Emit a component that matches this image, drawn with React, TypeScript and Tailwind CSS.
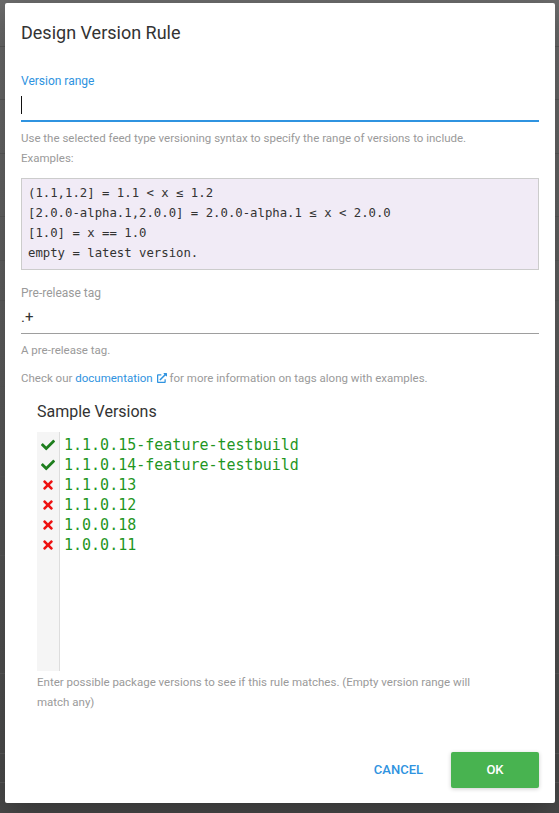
import React from "react";
import { FaCheck, FaTimes, FaExternalLinkAlt } from "react-icons/fa";

const versions = [
    { v: "1.1.0.15-feature-testbuild", ok: true },
    { v: "1.1.0.14-feature-testbuild", ok: true },
    { v: "1.1.0.13", ok: false },
    { v: "1.1.0.12", ok: false },
    { v: "1.0.0.18", ok: false },
    { v: "1.0.0.11", ok: false },
];

const examples = [
    "(1.1,1.2] = 1.1 < x ≤ 1.2",
    "[2.0.0-alpha.1,2.0.0] = 2.0.0-alpha.1 ≤ x < 2.0.0",
    "[1.0] = x == 1.0",
    "empty = latest version.",
];

const bgRows = [47, 53, 54, 63, 44, 40, 86, 90, 79, 118, 80, 29];

const App: React.FC = () => {
    return (
        <div className="relative w-[559px] h-[813px] overflow-hidden bg-gradient-to-b from-[#6c6c6c] to-[#4a4a4a] font-['Roboto',sans-serif]">
            {/* page behind the overlay */}
            <div className="flex flex-col">
                {bgRows.map((h, i) => (
                    <div key={i} className="border-b border-[#5a5a5a]" style={{ height: h }} />
                ))}
            </div>

            <div className="absolute left-[5px] top-[3px] w-[550px] h-[800px] bg-white rounded-[2px] shadow-[0_10px_30px_rgba(0,0,0,0.3)] flex flex-col">
                <h3 className="px-4 pt-[18px] text-[18px] leading-6 font-normal text-[#333]">Design Version Rule</h3>

                <div className="px-4 flex flex-col">
                    <label className="mt-[28px] text-[12px] leading-4 text-[#2f93e0]">Version range</label>
                    <div className="h-[33px] border-b-2 border-[#2f93e0] flex items-center">
                        <span className="w-px h-[18px] bg-[#111]" />
                    </div>
                    <p className="mt-[6px] text-[11.5px] leading-5 text-[#9a9a9a]">
                        Use the selected feed type versioning syntax to specify the range of versions to include.
                    </p>
                    <p className="text-[11.5px] leading-5 text-[#9a9a9a]">Examples:</p>
                    <div className="mt-[10px] h-[92px] bg-[#f1ebf6] border border-[#cccccc] pt-[4px] px-[6px] font-['DejaVu_Sans_Mono',monospace] text-[12.3px] leading-5 text-[#333]">
                        {examples.map((e) => (
                            <div key={e} className="whitespace-pre">{e}</div>
                        ))}
                    </div>

                    <label className="mt-[15px] text-[12px] leading-4 text-[#9a9a9a]">Pre-release tag</label>
                    <div className="h-[33px] border-b border-[#9e9e9e] flex items-center text-[15px] text-[#333]">.+</div>
                    <p className="mt-[6px] text-[11.5px] leading-5 text-[#9a9a9a]">A pre-release tag.</p>
                    <p className="mt-[8px] text-[11.5px] leading-5 text-[#9a9a9a] flex items-center">
                        Check our&nbsp;<span className="text-[#2f93e0]">documentation</span>
                        <FaExternalLinkAlt className="ml-[4px] text-[#2f93e0] w-[10px] h-[10px]" />
                        &nbsp;for more information on tags along with examples.
                    </p>

                    <div className="px-4 flex flex-col">
                        <h4 className="mt-[12px] text-[16px] leading-6 text-[#333]">Sample Versions</h4>
                        <div className="mt-[8px] h-[239px] flex">
                            <div className="w-[23px] bg-[#f5f5f5] border-r border-[#dddddd] pt-[3px] flex flex-col items-center">
                                {versions.map((x) => (
                                    <div key={x.v} className="h-5 flex items-center">
                                        {x.ok ? (
                                            <FaCheck className="w-[14px] h-[14px] text-[#1e7e1e]" />
                                        ) : (
                                            <FaTimes className="w-[14px] h-[14px] text-[#ee1111]" />
                                        )}
                                    </div>
                                ))}
                            </div>
                            <div className="pl-[4px] pt-[3px] font-['DejaVu_Sans_Mono',monospace] text-[15px] leading-5 text-[#1f961f]">
                                {versions.map((x) => (
                                    <div key={x.v}>{x.v}</div>
                                ))}
                            </div>
                        </div>
                        <p className="mt-[1px] w-[445px] text-[11.5px] leading-5 text-[#9a9a9a]">
                            Enter possible package versions to see if this rule matches. (Empty version range will match any)
                        </p>
                    </div>
                </div>

                <div className="mt-auto pb-[15px] px-4 flex justify-end items-center gap-3">
                    <button className="h-9 px-4 text-[13px] font-medium text-[#2f93e0]">CANCEL</button>
                    <button className="w-[88px] h-9 rounded-[2px] bg-[#48b350] text-white text-[13px] font-medium shadow-[0_1px_4px_rgba(0,0,0,0.2)]">OK</button>
                </div>
            </div>
        </div>
    );
};

export default App;
